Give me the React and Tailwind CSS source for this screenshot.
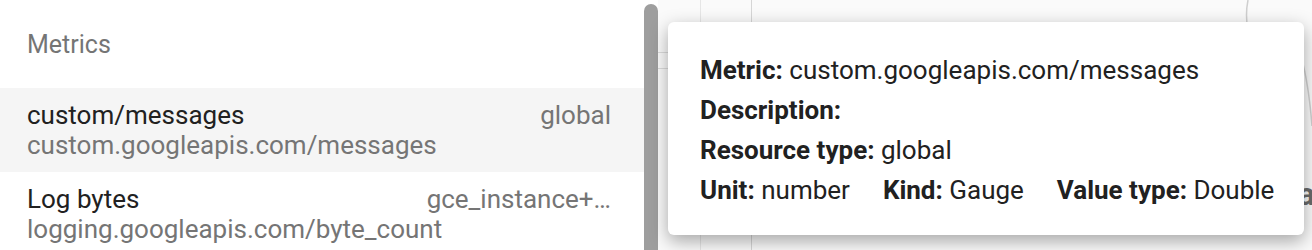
import React from 'react';

const rows = [
  { name: 'custom/messages', type: 'global', id: 'custom.googleapis.com/messages', active: true },
  { name: 'Log bytes', type: 'gce_instance+…', id: 'logging.googleapis.com/byte_count' },
];

const Field = ({ label, value, className = '' }) => (
  <span className={className}>
    <span className="font-bold">{label}:</span>
    {value ? ` ${value}` : ''}
  </span>
);

const App = () => {
  return (
    <div
      className="flex w-[1312px] h-[250px] overflow-hidden bg-white"
      style={{ fontFamily: 'Roboto, "Liberation Sans", sans-serif' }}
    >
      {/* Metric list */}
      <div className="w-[644px] shrink-0">
        <div className="h-[88px] flex items-center pl-[27px] pt-[2px] text-[25px] text-[#757575]">Metrics</div>
        {rows.map((r) => (
          <div
            key={r.id}
            className={`pl-[27px] pr-[33px] py-[12px] text-[26px] leading-[30px] ${r.active ? 'bg-[#f5f5f5]' : ''}`}
          >
            <div className="flex justify-between gap-4">
              <span className="text-[#212121] truncate">{r.name}</span>
              <span className="text-[#757575] shrink-0">{r.type}</span>
            </div>
            <div className="text-[#757575] truncate">{r.id}</div>
          </div>
        ))}
      </div>

      {/* Scrollbar */}
      <div className="w-[14px] shrink-0 pt-[4px]">
        <div className="h-full bg-[#9e9e9e] rounded-t-full" />
      </div>

      {/* Chart area behind the tooltip */}
      <div className="relative flex-1 bg-[#fafafa]">
        <div className="absolute left-0 top-[52px] w-[42px] h-px bg-[#dcdcdc]" />
        <div className="absolute left-0 top-[68px] w-[42px] h-px bg-[#dcdcdc]" />
        <div className="absolute left-[42px] top-0 h-full w-px bg-[#e6e6e6]" />
        <div className="absolute left-[93px] top-0 h-full w-px bg-[#d6d6d6]" />
        <svg className="absolute left-0 top-0" width="654" height="250">
          <path d="M590 0 C588 10 588 20 590 30" fill="none" stroke="#cfcfcf" strokeWidth="1.5" />
          <path d="M640 46 C648 70 652 100 654 126" fill="none" stroke="#d0d0d0" strokeWidth="1.5" />
        </svg>
        <span className="absolute left-[640px] top-[178px] text-[32px] font-bold text-[#6b6b6b] leading-none">a</span>

        {/* Tooltip card */}
        <div className="absolute left-[10px] top-[22px] w-[636px] h-[213px] bg-white rounded-[6px] shadow-[0_6px_18px_rgba(0,0,0,0.34)] pl-[32px] pt-[28px] text-[26px] leading-[40px] text-[#212121]">
          <div>
            <Field label="Metric" value="custom.googleapis.com/messages" />
          </div>
          <div>
            <Field label="Description" />
          </div>
          <div>
            <Field label="Resource type" value="global" />
          </div>
          <div className="flex gap-[33px]">
            <Field label="Unit" value="number" />
            <Field label="Kind" value="Gauge" />
            <Field label="Value type" value="Double" />
          </div>
        </div>
      </div>
    </div>
  );
};

export default App;
